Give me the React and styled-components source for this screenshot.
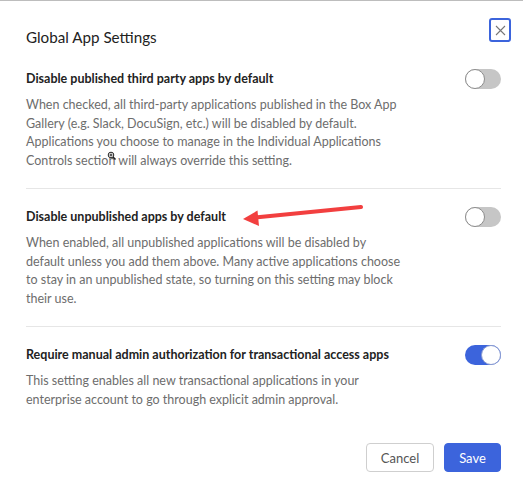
import React, { useState } from "react";
import styled, { createGlobalStyle } from "styled-components";

const GlobalStyle = createGlobalStyle`
  html, body { margin: 0; padding: 0; background: #ffffff; }
  body { font-family: Lato, "Open Sans", "Liberation Sans", sans-serif; -webkit-font-smoothing: antialiased; }
  * { box-sizing: border-box; }
`;

const Modal = styled.div`
  position: relative;
  width: 523px;
  min-height: 496px;
  border-top: 1px solid #bdbdbd;
  padding: 0 22px 0 26px;
  background: #fff;
`;

const Header = styled.div`
  display: flex;
  justify-content: space-between;
  align-items: flex-start;
  padding-top: 17px;
  height: 50px;
`;

const Title = styled.h1`
  margin: 7px 0 0;
  font-size: 15.2px;
  line-height: 24px;
  font-weight: 400;
  color: #222;
`;

const CloseButton = styled.button`
  width: 22px;
  height: 24px;
  margin-right: -10px;
  padding: 0;
  border: 2px solid #3c64dc;
  border-radius: 3px;
  background: #fff;
  display: flex;
  align-items: center;
  justify-content: center;
  cursor: pointer;
`;

const Section = styled.section`
  padding: 18px 0;
  border-bottom: ${(p) => (p.$last ? "none" : "1px solid #e6e6e6")};
`;

const TitleRow = styled.div`
  display: flex;
  justify-content: space-between;
  align-items: center;
  height: 20px;
`;

const SectionTitle = styled.h2`
  margin: 0;
  font-size: 12.5px;
  font-weight: 700;
  color: #222;
  line-height: 20px;
`;

const Description = styled.p`
  margin: 7px 0 0;
  max-width: 380px;
  font-size: 12.5px;
  line-height: 18.5px;
  color: #6d6d6d;
`;

const Track = styled.button`
  position: relative;
  width: 36px;
  height: 20px;
  padding: 0;
  border: none;
  border-radius: 10px;
  background: ${(p) => (p.$on ? "#3c64dc" : "#c6c6c6")};
  cursor: pointer;
  flex-shrink: 0;
`;

const Knob = styled.span`
  position: absolute;
  top: 0;
  left: ${(p) => (p.$on ? "16px" : "0")};
  width: 20px;
  height: 20px;
  border-radius: 50%;
  background: #fff;
  border: 1px solid ${(p) => (p.$on ? "#8a9bd0" : "#8c8c8c")};
`;

const Footer = styled.div`
  display: flex;
  justify-content: flex-end;
  gap: 10px;
  margin-top: 16px;
`;

const Button = styled.button`
  height: 29px;
  width: ${(p) => (p.$primary ? "57px" : "68px")};
  padding: 0;
  border-radius: 4px;
  font-family: inherit;
  font-size: 13px;
  border: 1px solid ${(p) => (p.$primary ? "#3c64dc" : "#cfcfcf")};
  background: ${(p) => (p.$primary ? "#3c64dc" : "#fff")};
  color: ${(p) => (p.$primary ? "#fff" : "#555")};
  cursor: pointer;
`;

const Overlay = styled.svg`
  position: absolute;
  left: 0;
  top: 0;
  pointer-events: none;
`;

function Toggle({ initial }) {
  const [on, setOn] = useState(initial);
  return (
    <Track $on={on} onClick={() => setOn(!on)} aria-pressed={on}>
      <Knob $on={on} />
    </Track>
  );
}

const sections = [
  {
    title: "Disable published third party apps by default",
    text: "When checked, all third-party applications published in the Box App Gallery (e.g. Slack, DocuSign, etc.) will be disabled by default. Applications you choose to manage in the Individual Applications Controls section will always override this setting.",
    on: false,
  },
  {
    title: "Disable unpublished apps by default",
    text: "When enabled, all unpublished applications will be disabled by default unless you add them above. Many active applications choose to stay in an unpublished state, so turning on this setting may block their use.",
    on: false,
  },
  {
    title: "Require manual admin authorization for transactional access apps",
    text: "This setting enables all new transactional applications in your enterprise account to go through explicit admin approval.",
    on: true,
  },
];

export default function App() {
  return (
    <>
      <GlobalStyle />
      <Modal>
        <Header>
          <Title>Global App Settings</Title>
          <CloseButton aria-label="Close">
            <svg width="11" height="11" viewBox="0 0 11 11">
              <path d="M1 1L10 10M10 1L1 10" stroke="#777" strokeWidth="1.1" fill="none" />
            </svg>
          </CloseButton>
        </Header>
        {sections.map((s, i) => (
          <Section key={i} $last={i === sections.length - 1}>
            <TitleRow>
              <SectionTitle>{s.title}</SectionTitle>
              <Toggle initial={s.on} />
            </TitleRow>
            <Description>{s.text}</Description>
          </Section>
        ))}
        <Footer>
          <Button>Cancel</Button>
          <Button $primary>Save</Button>
        </Footer>
        <Overlay width="527" height="496" viewBox="0 0 527 496">
          <line x1="361" y1="206" x2="255" y2="216.5" stroke="#f23f3f" strokeWidth="4" strokeLinecap="round" />
          <polygon points="243,218 257.5,209.5 259,225" fill="#f23f3f" />
          <g stroke="#222" strokeWidth="1" fill="none">
            <circle cx="111" cy="154" r="2.8" />
            <path d="M109.5 154H112.5M111 152.5V155.5" />
            <path d="M113 156L115.5 158.5" strokeWidth="1.6" />
          </g>
        </Overlay>
      </Modal>
    </>
  );
}
